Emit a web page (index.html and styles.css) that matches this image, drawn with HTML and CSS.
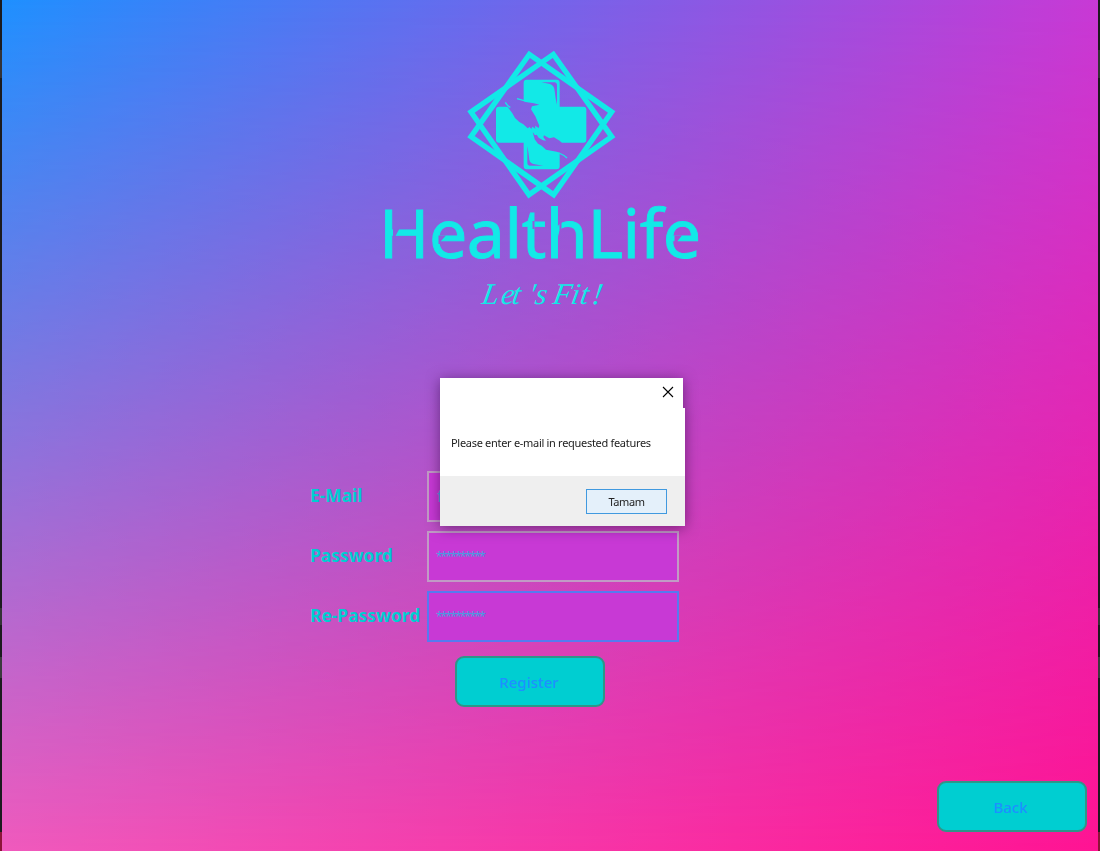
FILE: index.html
```html
<!DOCTYPE html>
<html lang="en">
<head>
<meta charset="utf-8">
<title>HealthLife</title>
<link rel="stylesheet" href="styles.css">
</head>
<body>
<div class="desktop">
  <main class="window">
    <svg class="logo" width="330" height="275" viewBox="375 40 330 275" role="img" aria-label="HealthLife">
      <defs>
        <mask id="hands" maskUnits="userSpaceOnUse" x="0" y="0" width="495" height="495">
          <rect width="495" height="495" fill="#fff"/>
          <path d="M134 186L146 205L157 220L165 234L178 246L190 253L203 265L209 261L214 267L217 260L226 266L225 257L236 264L238 257L226 229L213 208L216 199L238 194L222 190L197 186L180 180L160 180Z"/>
          <path d="M218 276L225 286L230 284L236 293L249 301L258 302L250 292L252 286L268 295L282 292L300 303L309 312L300 312V338L290 335L258 329L245 317L234 311L224 298Z"/>
          <path d="M244 127L284 127Q291 128 291 134L291 194Q286 174 284 153Q283 137 270 132Z"/>
          <path d="M202 318Q206 340 208 359Q210 370 224 373L250 377L208 377Q202 376 202 370Z"/>
        </mask>
        <mask id="cuts" maskUnits="userSpaceOnUse" x="375" y="195" width="330" height="75">
          <rect x="375" y="195" width="330" height="75" fill="#fff"/>
          <path d="M393 226V238H394.500L399 229.500V226Z"/>
          <path d="M438.500 235.500H446L441 241V244H438.500Z"/>
          <path d="M674.500 235.500H682L677.500 241V244H674.500Z"/>
          <path d="M532.500 221H534.500V229H532.500Z"/>
          <path d="M559.500 221H561.500V232H559.500Z"/>
        </mask>
      </defs>
      <g class="ink" transform="translate(460 40) scale(.333333)">
        <g class="frames">
          <path d="M208 43L455 216L281 464L33 290Z"/>
          <path d="M280 43L33 216L207 464L455 290Z"/>
        </g>
        <path mask="url(#hands)" d="M200 119H290Q299 119 299 128V200H370Q379 200 379 209V299Q379 308 370 308H299V379Q299 388 290 388H200Q191 388 191 379V308H117Q108 308 108 299V209Q108 200 117 200H191V128Q191 119 200 119Z"/>
        <path class="fingers" d="M136 187Q142 198 151 202M171 176Q190 182 207 184M297 339Q312 345 321 354"/>
      </g>
      <text class="ink brand" x="379" y="258" textLength="322" lengthAdjust="spacing" mask="url(#cuts)">HealthLife</text>
      <text class="ink motto" transform="translate(0 304) skewX(-10)" x="481 500 511 527 534 545 552 570 579 591" y="0">Let's&#160;Fit!</text>
    </svg>
    <form class="form">
      <label class="label" for="mail">E-Mail</label><div id="mail" class="field mail">f</div>
      <label class="label" for="pass">Password</label><div id="pass" class="field">**********</div>
      <label class="label" for="again">Re-Password</label><div id="again" class="field focused">**********</div>
    </form>
    <button class="button register">Register</button>
    <button class="button back">Back</button>
    <section class="dialog" role="dialog">
      <div class="caption"><svg width="12" height="12" viewBox="0 0 12 12"><path class="close" d="M1 1L11 11M11 1L1 11"/></svg></div>
      <p class="message">Please enter e-mail in requested features</p>
      <div class="actions"><button class="ok">Tamam</button></div>
    </section>
  </main>
</div>
</body>
</html>
```
FILE: styles.css
```css
* { box-sizing: border-box; }
body { margin: 0; font-family: "Noto Sans", sans-serif; }
.desktop {
  height: 851px;
  padding: 0 2px;
  overflow: hidden;
  background: linear-gradient(#1b1b1e 0 50px, #333336 50px 78px, #1b1b1e 78px 608px, #333336 608px 625px, #1b1b1e 625px 657px, #3a3a3d 657px 678px, #1b1b1e 678px 832px, #8b1538 832px);
}
.window {
  position: relative;
  isolation: isolate;
  display: flex;
  flex-direction: column;
  height: 851px;
  padding: 40px 11px 0 0;
  background: linear-gradient(90deg, #f05abd, #ff1493);
}
/* Fading the top edge's colours into the bottom edge's gives a four-corner blend. */
.window::before {
  content: "";
  position: absolute;
  inset: 0;
  z-index: -1;
  background: linear-gradient(90deg, #1e90ff, #c839d5);
  -webkit-mask-image: linear-gradient(#000, transparent);
  mask-image: linear-gradient(#000, transparent);
}
.logo { display: block; flex: none; margin-left: 373px; }
.ink { fill: #12e9e7; }
.frames { fill: none; stroke: #12e9e7; stroke-width: 16; }
.fingers { fill: none; stroke: #12e9e7; stroke-width: 4; }
.brand { font: 400 68px "Noto Sans", sans-serif; stroke: #12e9e7; stroke-width: .9; }
.motto { font: italic 30px "Liberation Serif", serif; }
.form {
  display: grid;
  grid-template-columns: 117px 252px;
  grid-auto-rows: 51px;
  row-gap: 9px;
  margin: 156px 0 0 308px;
}
.label { color: #00ced1; font-size: 17.4px; font-weight: 700; line-height: 49px; white-space: nowrap; }
.field {
  border: 2px solid #c19bc5;
  padding: 0 0 0 7px;
  background: #c839d5;
  color: #479ee0;
  font: 12px/48px "Noto Sans", sans-serif;
  letter-spacing: -1.8px;
}
.mail { padding-left: 8px; font: 16px/46px "Noto Sans", sans-serif; }
.focused { border-color: #567af0; }
.button {
  width: 150px;
  height: 51px;
  border: 2px solid #2e9688;
  border-radius: 9px;
  padding: 1px 0 0;
  background: #00ced1;
  color: #1e90ff;
  font: 500 15px "Noto Sans", sans-serif;
}
.register { margin: 14px 0 0 453px; padding-right: 2px; }
.back { align-self: flex-end; margin-top: 74px; padding-right: 3px; }
.dialog {
  position: absolute;
  left: 438px;
  top: 378px;
  width: 245px;
  height: 148px;
  display: flex;
  flex-direction: column;
  filter: drop-shadow(0 2px 7px rgba(30, 0, 50, .5));
}
.caption { width: 243px; height: 30px; padding: 8px 9px; text-align: right; line-height: 0; background: #fff; }
.close { stroke: #000; stroke-width: 1.1; fill: none; }
.message { margin: 0; height: 68px; padding: 26px 0 0 11px; background: #fff; color: #222; font-size: 11px; line-height: 18px; letter-spacing: -.3px; white-space: nowrap; }
.actions { height: 50px; padding: 13px 18px 12px; display: flex; justify-content: flex-end; background: #efefef; }
.ok { width: 81px; height: 25px; padding: 0; border: 1px solid #4099df; background: #e4f0fa; color: #222; font: 11px "Noto Sans", sans-serif; letter-spacing: -.4px; }
```
